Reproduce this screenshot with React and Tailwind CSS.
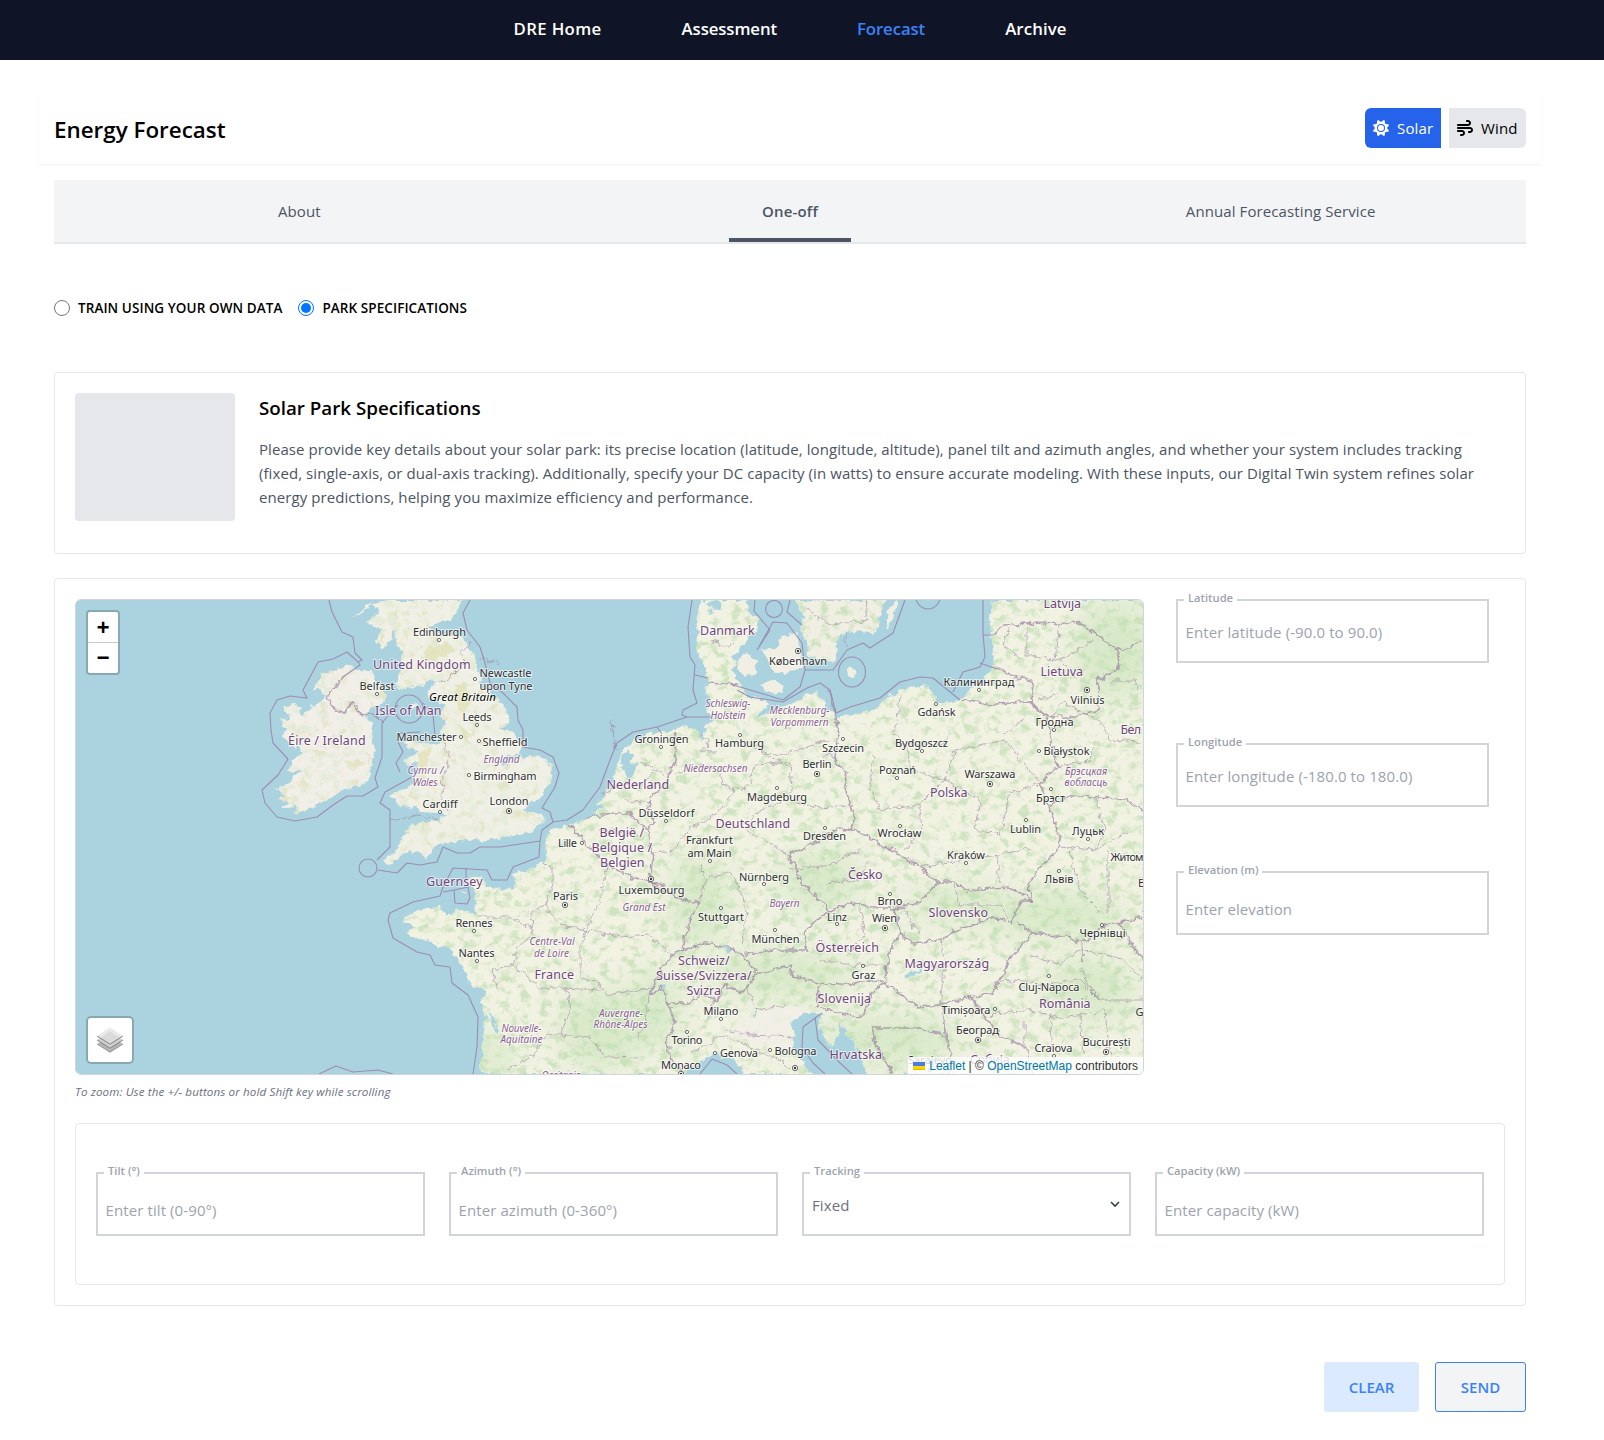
import React from "react";
import { FaSun, FaWind } from "react-icons/fa6";

const LAND =
  "M479 1074L483 1047L485 1017L483 1010L480 1002L487 992L473 987L467 977L463 968L457 957L450 948L437 947L427 940L413 938L407 932L415 927L403 922L407 915L420 912L428 908L440 907L447 915L458 910L468 912L478 913L475 903L475 890L468 882L468 877L482 877L487 887L500 890L513 888L516 883L513 874L527 870L543 863L548 855L547 840L548 831L570 825L587 818L600 816L592 812L604 806L597 804L607 790L617 770L619 757L624 749L634 741L650 733L667 732L674 728L690 727L697 733L703 742L707 723L715 720L706 710L714 703L705 693L708 683L705 667L697 653L698 633L696 620L700 600L747 600L750 615L760 618L757 630L747 638L743 645L733 657L737 662L732 670L735 678L742 687L747 697L760 697L767 703L757 718L773 710L787 705L800 701L806 694L817 693L823 699L827 710L840 718L860 713L880 706L887 697L907 688L928 685L935 697L937 702L950 705L962 697L974 687L987 676L994 664L992 640L989 617L992 600L1144 600L1144 1075L868 1075L858 1052L850 1038L840 1023L837 1036L832 1048L823 1036L819 1023L822 1013L807 1013L790 1022L795 1037L793 1047L803 1064L812 1075L745 1075L737 1063L723 1057L715 1053L703 1060L690 1070L683 1075Z";
const BRITAIN =
  "M462 600L457 610L452 620L441 622L428 627L440 634L462 637L468 647L475 657L477 670L483 687L490 693L503 703L510 717L507 726L498 728L515 733L521 744L520 755L507 756L498 762L506 765L514 758L527 756L540 757L549 762L552 770L550 783L543 795L532 803L522 810L533 812L545 816L541 823L530 832L520 835L503 837L483 842L473 840L458 842L440 843L432 848L432 855L425 857L420 850L410 852L403 855L395 860L392 865L383 862L390 855L397 848L400 842L407 830L417 823L430 822L440 820L447 813L437 813L423 812L414 806L400 807L392 795L400 790L412 783L417 772L418 763L402 764L407 757L418 750L407 748L405 741L420 743L437 745L443 740L441 730L445 723L440 713L447 707L437 700L428 697L427 690L438 682L430 680L418 687L412 685L403 690L398 687L397 677L403 667L402 653L397 643L393 628L391 640L380 648L377 640L384 627L373 628L366 621L380 613L373 603L390 600Z";
const IRELAND =
  "M347 664L353 668L362 670L372 670L375 677L380 687L386 695L384 704L374 705L365 716L372 723L373 740L374 757L370 770L368 783L353 787L340 792L327 800L313 808L293 813L297 807L282 808L290 802L278 799L287 795L275 788L290 783L293 777L302 770L288 772L293 760L305 750L293 748L282 737L287 730L280 722L290 718L282 707L293 705L302 708L300 717L313 707L323 700L327 693L313 690L320 680L323 673L337 670Z";
const ISLES = [
  "M737 658L747 653L756 661L757 673L747 677L738 671Z",
  "M763 650L777 646L782 637L797 633L800 653L802 668L790 671L777 674L768 665Z",
  "M760 684L773 680L784 684L782 693L767 692Z",
  "M796 600L803 617L800 627L807 640L808 656L833 662L838 653L836 640L847 630L875 634L878 627L881 607L888 600Z",
  "M886 628L888 610L895 600L898 601L893 617L888 629Z",
  "M847 668L856 670L855 678L848 675Z",
  "M410 706L416 701L414 711Z",
  "M374 600L366 609L352 619L361 610Z",
  "M461 892L466 892L465 895Z",
];
const LAKES = [
  "M620 760L627 749L634 754L631 764L638 763L634 772L628 779L624 772Z",
  "M657 987L667 984L667 989Z",
  "M903 977L922 969L923 971L905 979Z",
  "M753 1015L757 1008L755 1019Z",
  "M717 944L731 950L729 952Z",
  "M487 1010L495 1020L498 1032L494 1028Z",
  "M703 603L712 608L708 616L714 613L712 606L722 610L720 602Z",
];

const NATIONS = [
  "M830 690L835 713L839 737L834 762L847 770L845 787L854 820L852 830L840 828L820 840L790 855L800 880L830 912L852 902L877 908L895 908L920 902L938 882L920 867L897 853L885 847L860 832L852 830",
  "M938 882L953 882L967 892L990 888L1010 887L1032 900L1028 883L1047 860L1060 847L1060 837L1050 810L1040 783L1057 767L1047 717L1030 702L993 704L960 700",
  "M1030 702L1032 680L1010 676L997 667",
  "M993 635L1003 625L1037 622L1060 625L1077 621L1093 632L1117 650L1130 648L1142 640",
  "M1117 650L1120 668L1098 680L1098 710L1077 717L1047 717",
  "M1050 807L1067 797L1100 797L1127 800L1143 810",
  "M900 933L913 943L940 940L960 928L993 918L1010 922L1023 900L1032 900",
  "M1017 922L1033 933L1013 953L1003 973L993 993L970 997L940 1005L917 1007L885 983L887 963L892 945L900 933L895 908",
  "M1033 933L1073 938L1082 943L1100 928L1120 922L1143 918M1120 922L1130 943L1143 958",
  "M830 912L817 920L803 933L807 950L773 950L743 955L727 947L707 943L683 950L687 927L698 902L673 897L650 882L630 877L608 865L585 843L570 825",
  "M587 818L613 813L630 813L647 830L653 853L650 882L663 885L673 897",
  "M675 733L676 760L667 780L648 803L653 823L647 830",
  "M683 950L672 955L657 977L650 995L663 987L668 1003L690 1003L700 993L717 1000L725 985L743 992L757 973L743 955",
  "M757 973L767 973L790 965L793 977L820 982L847 985L867 980L885 983",
  "M668 1003L675 1023L667 1040L670 1057L682 1072",
  "M820 983L817 1007L840 1013L863 1017L873 990L885 983",
  "M942 1007L947 1037L920 1028L873 1028L873 1040L893 1074M947 1037L952 1060L948 1074",
  "M970 997L990 1023L1000 1037L1027 1047L1031 1074",
  "M708 682L722 683L737 685",
  "M343 677L333 690L327 699L338 712L345 713L352 702L362 715L375 713L382 723",
];
const SEA = [
  "M329 600L332 612L342 632L353 637L355 653L362 660L358 662L360 665L343 677M358 662L347 652L333 659L318 662L310 677L303 690L307 698L290 696L277 700L270 713L271 730L273 743L288 759L278 775L262 790L265 803L277 817L295 821L317 817L333 805L347 796L363 796L378 787L375 778L382 757L382 723L391 712",
  "M470 600L463 613L467 630L480 647L485 663L490 683L503 693L517 707L518 720L523 730L523 747L540 750L553 757L559 773L555 787L542 808L550 812L553 822L542 830L540 841L520 844L500 847L480 847L470 853L457 853L443 847L437 862L420 865L407 863L397 873L378 870",
  "M540 841L539 857L513 867L507 880L492 880L487 870L453 868L443 887L440 896L413 902L390 913L388 920L393 938L417 952L430 955L435 965L450 967L452 983L468 995L478 1017L477 1047L473 1074",
  "M377 860L390 847L390 810L380 803L385 792L412 777M454 890L468 887L470 898L467 904L455 903ZM466 868L466 880M443 892L454 890",
  "M400 772L396 763L403 752L397 740L400 733L420 732M423 703L433 715L435 735M391 712L398 705",
  "M319 1074L336 1066L353 1072L378 1070L393 1074",
  "M692 600L688 627L690 657L695 665L693 690L697 703L683 710L682 715L687 717L657 727L633 732L617 743L610 760L600 787L583 810L567 820L553 822M695 675L708 678M687 717L711 717M657 727L662 734",
  "M757 650L770 630L754 611L755 600M757 650L773 622L787 623L802 643L805 670L833 670L847 650L863 643L870 648L893 633L905 600M790 600L787 612L802 625",
  "M733 685L757 692L783 700L800 687L805 670M737 690L750 697L783 702L807 688L820 683L830 690L836 713L850 707L880 698L900 682L920 677L933 678L960 700M953 692L963 672L980 667L985 657L983 633L983 600M983 635L993 635M980 663L997 669",
  "M822 1013L803 1027L802 1047L813 1063L825 1074M815 1017L818 1040L840 1063L852 1074",
  "M700 1074L712 1059L727 1065L737 1074",
];
const REGIONS = [
  "M478 917L507 917L530 927L532 935L517 948L513 965L492 970L498 990M513 965L540 988L565 988L571 1005L560 1035L546 1034L535 1055L507 1070M560 1035L590 1037L605 1057L640 1058M565 988L600 990M532 935L533 910L545 905L552 885L552 867L543 863",
  "M545 905L560 925L587 930L600 900L607 867M587 930L580 945L580 977L600 985L605 995L640 990L655 985M587 930L620 937L650 935L672 955",
  "M443 743L450 757L443 775L442 800L448 812M472 641L460 655L466 662L450 678L438 682M480 658L500 664",
  "M390 820L415 815L440 820M650 990L645 1025L637 1040",
  "M710 640L725 648L733 643M675 775L700 765L720 770L723 785L733 790L725 805L708 820L690 828L673 850L655 852M723 785L745 790L757 765L790 762L792 790L785 800L757 812L745 830",
  "M700 865L705 880L700 900M705 880L730 872L740 890L748 912L742 945M760 750L780 755L830 740M790 800L820 808L850 805M745 830L790 855",
  "M750 745L790 768M820 760L830 752L840 765M703 733L708 745L700 752L716 752",
  "M900 695L895 735L907 745L942 745L950 730M873 755L870 785L880 810L920 805L945 780L955 750L1005 740L1025 765L1040 783M907 745L912 770L945 780L980 800L975 830L1000 835M920 805L922 830L905 850M1000 835L1010 793L1040 783",
  "M1025 718L1003 735M1040 700L1060 693M1010 627L1003 645L1020 660M1027 627L1027 655L1060 660M1060 625L1055 660M1093 640L1060 660L1075 680M1050 718L1062 703L1100 720L1110 740L1140 742M1110 680L1135 680L1138 690",
  "M1057 767L1090 760L1095 742M1095 797L1105 830L1095 850M1070 850L1080 890L1100 910M1108 850L1108 915M1060 847L1095 850L1130 830",
  "M940 940L945 960L940 1005M905 910L918 935M960 905L1000 905L1012 925M953 882L960 905M997 855L1000 885M920 867L960 860L1000 855L1030 848",
  "M1030 955L1060 965L1080 950L1120 958L1143 980M1040 985L1080 980L1100 1000L1143 1000M1000 980L1035 983M1025 1020L1025 1045M1050 1015L1053 1050M1080 1015L1083 1055M1105 1010L1110 1060M990 1015L1025 1010L1060 1017L1100 1012M1082 943L1083 975L1095 995",
  "M790 870L830 865L860 850M825 883L858 880L870 860M820 960L850 965L880 965M860 905L865 935L845 955M745 985L755 1010L790 1005M725 1030L750 1035L795 1037M707 1020L715 1000M690 1053L725 1035L780 1060L790 1070",
  "M612 720L615 750M640 762L665 775M625 800L650 803M600 830L640 835M637 790L655 770M600 795L630 782",
  "M807 610L830 625L870 620M865 600L868 620M845 630L845 645",
];

// [text, centre x, baseline y, width]
const COUNTRIES = [
  ["United Kingdom", 422, 668.5, 98], ["Isle of Man", 408.5, 714.5, 67], ["Éire / Ireland", 327, 745, 78],
  ["Danmark", 727.5, 634.5, 55], ["Nederland", 638, 788.5, 63], ["België /", 622, 837, 45],
  ["Belgique /", 622, 852, 61], ["Belgien", 622.5, 867, 45], ["Deutschland", 753, 828, 75],
  ["Guernsey", 454.5, 885.5, 57], ["France", 554.5, 979, 40], ["Polska", 949, 797, 38],
  ["Lietuva", 1062, 676, 43], ["Latvija", 1062.5, 608, 38], ["Бел", 1131, 733.5, 21],
  ["Česko", 865.5, 878.5, 35], ["Slovensko", 958.5, 916.5, 60], ["Österreich", 847.5, 951.5, 64],
  ["Magyarország", 947, 968, 85], ["Slovenija", 844.5, 1002.5, 54], ["Hrvatska", 856, 1059, 53],
  ["România", 1065, 1008, 52], ["Schweiz/", 704, 964.5, 52], ["Suisse/Svizzera/", 704, 979.5, 96],
  ["Svizra", 704, 995, 35], ["Србија", 990, 1064, 40],
];
const AREAS = [
  ["England", 501.5, 763, 36], ["Cymru /", 425.5, 774, 36], ["Wales", 425, 786, 25],
  ["Schleswig-", 728, 706.5, 45], ["Holstein", 728, 718.5, 35], ["Mecklenburg-", 799.5, 714, 60],
  ["Vorpommern", 799.5, 726, 58], ["Niedersachsen", 715.5, 772, 64], ["Grand Est", 644, 911, 43],
  ["Bayern", 784.5, 906.5, 30], ["Centre-Val", 552, 944.5, 45], ["de Loire", 551.5, 956.5, 35],
  ["Nouvelle-", 521.5, 1031.5, 40], ["Aquitaine", 521.5, 1043, 42], ["Auvergne-", 621, 1016.5, 44],
  ["Rhône-Alpes", 620.5, 1028, 54], ["Occitanie", 561, 1079, 39], ["Брэсцкая", 1086, 774.5, 42],
  ["вобласць", 1086, 786, 43],
];
const CITIES = [
  ["Edinburgh", 439.5, 636, 53], ["Newcastle", 505.5, 676.5, 52], ["upon Tyne", 506, 690, 53],
  ["Belfast", 377, 690, 35], ["Leeds", 477, 721, 29], ["Manchester", 426.5, 741, 60],
  ["Sheffield", 505, 745.5, 45], ["Birmingham", 505, 779.5, 63], ["Cardiff", 440, 808, 35],
  ["London", 509, 805, 39], ["Lille", 567.5, 846.5, 19], ["Groningen", 661.5, 743, 54],
  ["Hamburg", 739.5, 747, 49], ["Szczecin", 843, 751.5, 42], ["Berlin", 817, 768, 29],
  ["København", 798, 665, 58], ["Magdeburg", 777, 800.5, 60], ["Düsseldorf", 666.5, 817, 56],
  ["Frankfurt", 709.5, 843.5, 47], ["am Main", 709.5, 857, 44], ["Dresden", 824.5, 840, 43],
  ["Nürnberg", 764, 880.5, 50], ["Luxembourg", 651.5, 893.5, 66], ["Stuttgart", 721, 920.5, 46],
  ["München", 775.5, 942.5, 48], ["Linz", 837, 920.5, 20], ["Paris", 565.5, 899.5, 25],
  ["Rennes", 474, 927, 37], ["Nantes", 476.5, 957, 36], ["Graz", 863.5, 978.5, 24],
  ["Milano", 721, 1015, 35], ["Torino", 687, 1043.5, 31], ["Genova", 739, 1057, 38],
  ["Bologna", 795.5, 1054.5, 42], ["Monaco", 681, 1068.5, 40], ["Wrocław", 899.5, 837, 44],
  ["Poznań", 897.5, 773.5, 37], ["Bydgoszcz", 921.5, 747, 53], ["Gdańsk", 936.5, 716, 38],
  ["Калининград", 979, 685.5, 71], ["Warszawa", 990, 778, 51], ["Białystok", 1066.5, 755, 46],
  ["Vilnius", 1087.5, 704, 34], ["Гродна", 1054.5, 725.5, 38], ["Брэст", 1050.5, 802, 29],
  ["Lublin", 1025.5, 833, 31], ["Луцьк", 1088, 835, 32], ["Львів", 1059, 883, 29],
  ["Kraków", 966, 858.5, 38], ["Житом", 1127, 860.5, 33], ["В", 1141.5, 887, 7],
  ["Brno", 890, 905, 25], ["Wien", 884.5, 921.5, 25], ["Чернівці", 1102.5, 937, 46],
  ["Cluj-Napoca", 1049, 990.5, 61], ["Timișoara", 966, 1014, 49], ["Београд", 977.5, 1034, 43],
  ["Craiova", 1053.5, 1052, 38], ["București", 1106.5, 1046, 48], ["G", 1139.5, 1016, 7],
  ["Sarajevo", 930, 1064, 44],
];
const DOTS = [
  [439, 640], [475, 679], [377, 694], [477, 725], [461, 737], [479, 741], [469, 775], [440, 812],
  [582, 843], [661, 747], [740, 735], [843, 739], [777, 788], [666, 821], [710, 861], [825, 828],
  [764, 884], [721, 908], [775, 930], [837, 924], [474, 931], [477, 961], [863, 966], [721, 1019],
  [687, 1032], [715, 1053], [770, 1050], [900, 826], [897, 778], [922, 751], [936, 704], [979, 690],
  [1039, 751], [1054, 730], [1051, 789], [1026, 820], [1088, 839], [1059, 871], [966, 863], [890, 894],
  [1102, 925], [1049, 976], [995, 1009], [1054, 1056], [930, 1070],
];
const CAPITALS = [
  [509, 811], [565, 905], [798, 651], [817, 774], [651, 879], [990, 784], [1087, 690], [885, 928],
  [978, 1040], [1106, 1052], [795, 1068], [681, 1074],
];

function Labels({ items, className, size, spacing }) {
  return items.map(([text, x, y, width]) => (
    <text
      key={text + x}
      x={x}
      y={y}
      textAnchor="middle"
      textLength={width}
      fontSize={size}
      letterSpacing={spacing}
      className={className}
      stroke="#ffffff"
      strokeOpacity="0.65"
      strokeWidth="2"
      strokeLinejoin="round"
      paintOrder="stroke"
    >
      {text}
    </text>
  ));
}

function EuropeMap() {
  return (
    <svg viewBox="76 600 1067 474" className="block h-full w-full font-['Noto_Sans',sans-serif]">
      <defs>
        <filter id="rough" x="0" y="0" width="100%" height="100%" colorInterpolationFilters="sRGB">
          <feTurbulence type="fractalNoise" baseFrequency="0.14" numOctaves="3" seed="4" result="n" />
          <feDisplacementMap in="SourceGraphic" in2="n" scale="8" xChannelSelector="R" yChannelSelector="G" />
        </filter>
        <filter id="forest" filterUnits="userSpaceOnUse" x="76" y="600" width="1067" height="474" colorInterpolationFilters="sRGB">
          <feTurbulence type="fractalNoise" baseFrequency="0.1 0.12" numOctaves="5" seed="11" />
          <feColorMatrix values="0 0 0 0 0.75  0 0 0 0 0.87  0 0 0 0 0.69  4 0 0 0 -1.95" />
          <feComposite in2="SourceGraphic" operator="in" />
        </filter>
        <filter id="heath" filterUnits="userSpaceOnUse" x="76" y="600" width="1067" height="474" colorInterpolationFilters="sRGB">
          <feTurbulence type="fractalNoise" baseFrequency="0.1" numOctaves="4" seed="23" />
          <feColorMatrix values="0 0 0 0 0.88  0 0 0 0 0.89  0 0 0 0 0.74  0 6 0 0 -3.5" />
          <feComposite in2="SourceGraphic" operator="in" />
        </filter>
        <filter id="soft" x="-50%" y="-50%" width="200%" height="200%">
          <feGaussianBlur stdDeviation="14" />
        </filter>
        <clipPath id="main"><path d={LAND} /></clipPath>
      </defs>
      <rect x="76" y="600" width="1067" height="474" fill="#aad3df" />
      <g filter="url(#rough)">
        <rect x="76" y="600" width="1067" height="474" fill="#aad3df" />
        <path d={LAND} fill="#f2f2e3" />
        <path d={BRITAIN} fill="#f1f0e6" />
        <path d={IRELAND} fill="#f1efe8" />
        {ISLES.map((d) => <path key={d} d={d} fill="#f1efe4" />)}
        <g clipPath="url(#main)">
          <g filter="url(#soft)" fill="#cde5bd" opacity="0.7">
            <ellipse cx="780" cy="975" rx="75" ry="22" />
            <ellipse cx="1055" cy="915" rx="70" ry="22" />
            <ellipse cx="1090" cy="990" rx="45" ry="30" />
            <ellipse cx="960" cy="905" rx="55" ry="16" />
            <ellipse cx="600" cy="1030" rx="40" ry="40" />
            <ellipse cx="495" cy="1055" rx="16" ry="26" />
            <ellipse cx="890" cy="1040" rx="70" ry="24" />
            <ellipse cx="700" cy="900" rx="30" ry="45" />
            <ellipse cx="655" cy="1010" rx="26" ry="40" />
            <ellipse cx="1115" cy="650" rx="40" ry="50" />
            <ellipse cx="820" cy="880" rx="40" ry="30" />
          </g>
        </g>
        <g filter="url(#forest)" opacity="0.7"><path d={LAND} /><path d={ISLES[3]} /></g>
        <g filter="url(#forest)" opacity="0.25"><path d={BRITAIN} /><path d={IRELAND} /></g>
        <g filter="url(#heath)" opacity="0.7"><path d={BRITAIN} /><path d={IRELAND} /></g>
        <path d="M738 1020L790 1004L806 1013L788 1024L792 1050L770 1046L730 1036Z" fill="#f2eee7" opacity="0.85" />
        <g fill="#dfe0b2" opacity="0.7">
          <path d="M425 648L446 643L455 650L440 658L425 660Z M455 685L466 682L472 700L464 715L456 705Z M380 640L385 628L383 645Z M418 755L430 748L428 764L418 770Z M458 725L466 730L470 745L464 740Z M366 750L371 755L368 762Z M281 795L292 797L285 802Z" />
        </g>
        {LAKES.map((d) => <path key={d} d={d} fill="#aad3df" />)}
        <g fill="none" stroke="#a088a6" strokeLinejoin="round">
          {REGIONS.map((d) => <path key={d} d={d} strokeWidth="0.9" opacity="0.7" />)}
          {NATIONS.map((d) => <path key={d} d={d} strokeWidth="1.7" opacity="0.75" />)}
        </g>
      </g>
      <g fill="none" stroke="#9a86ad" strokeWidth="1.1" strokeLinejoin="round" opacity="0.9">
        {SEA.map((d) => <path key={d} d={d} />)}
        <circle cx="368" cy="868" r="9" />
        <circle cx="409" cy="709" r="14" />
        <circle cx="774" cy="609" r="8.5" />
        <circle cx="928" cy="597" r="12" />
        <ellipse cx="852" cy="672" rx="13.5" ry="15" />
      </g>
      <g fill="#ffffff" stroke="#4a4a4a" strokeWidth="0.8">
        {DOTS.map(([x, y]) => <circle key={x + "-" + y} cx={x} cy={y} r="1.6" />)}
        {CAPITALS.map(([x, y]) => <circle key={x + "-" + y} cx={x} cy={y} r="2.7" />)}
      </g>
      {CAPITALS.map(([x, y]) => <circle key={x + "-" + y} cx={x} cy={y} r="1.2" fill="#333333" />)}
      <Labels items={AREAS} className="fill-[#8b5f91] italic" size="10" />
      <Labels items={COUNTRIES} className="fill-[#70457a]" size="12.5" spacing="0.4" />
      <Labels items={CITIES} className="fill-[#2f2f2f]" size="11" />
      <Labels items={[["Great Britain", 462.5, 700.5, 67]]} className="fill-black italic" size="11.5" />
    </svg>
  );
}

function LayersIcon() {
  return (
    <svg viewBox="0 0 26 26" className="h-[26px] w-[26px]">
      <path d="M0 17L13 9L26 17L13 25.4Z" fill="#b5b5b5" />
      <path d="M0 17L13 25.2L26 17" fill="none" stroke="#8d8d8d" strokeWidth="0.8" />
      <path d="M0 13L13 5L26 13L13 21.4Z" fill="#cfcfcf" />
      <path d="M0 13L13 21.2L26 13" fill="none" stroke="#777777" strokeWidth="0.9" />
      <path d="M0 9L13 0.6L26 9L13 17.4Z" fill="#e9e9e9" />
      <path d="M3 11L13 4.5L23 11L13 17.2Z" fill="#dadada" />
      <path d="M0 9L13 17.2L26 9" fill="none" stroke="#777777" strokeWidth="0.9" />
    </svg>
  );
}

function Field({ label, placeholder, inputClass, children }) {
  return (
    <div className="relative h-16 border-2 border-[#d1d5db]">
      <label className="absolute -top-[11px] left-1.5 bg-white px-1 text-[11.2px] leading-4 font-semibold whitespace-nowrap text-[#9ca3af]">
        {label}
      </label>
      {children || (
        <input
          placeholder={placeholder}
          className={"h-full w-full bg-transparent px-[7.5px] text-[15px] tracking-[0.1px] outline-none placeholder:text-[#9ca3af] " + inputClass}
        />
      )}
    </div>
  );
}

function Tab({ active, children }) {
  return (
    <div className="flex flex-1 justify-center">
      <button
        className={
          active
            ? "w-[122px] border-b-4 border-[#4b5563] pt-1 text-[15px] font-semibold tracking-[0.2px] text-[#4b5563]"
            : "border-b-4 border-transparent pt-1 text-[15px] tracking-[0.1px] text-[#4b5563]"
        }
      >
        {children}
      </button>
    </div>
  );
}

function Radio({ checked, children }) {
  return (
    <label className="flex items-center gap-2">
      <span
        className={
          checked
            ? "flex h-4 w-4 items-center justify-center rounded-full border border-[#0075ff]"
            : "flex h-4 w-4 items-center justify-center rounded-full border border-[#767676]"
        }
      >
        {checked && <span className="h-2.5 w-2.5 rounded-full bg-[#0075ff]" />}
      </span>
      <span className="text-[13.5px] leading-5 font-semibold tracking-[0.08px] whitespace-nowrap">{children}</span>
    </label>
  );
}

export default function App() {
  return (
    <div className="h-[1440px] w-[1604px] overflow-hidden bg-white font-['Open_Sans',sans-serif] text-black">
      <header className="h-[60px] bg-[#0f1526] pr-6">
        <nav className="flex h-[58px] items-center justify-center gap-20 text-[16.8px] font-semibold text-white">
          <a className="tracking-[0.35px]">DRE Home</a>
          <a className="tracking-[-0.1px]">Assessment</a>
          <a className="tracking-[-0.1px] text-[#3b82f6]">Forecast</a>
          <a className="tracking-[0.1px]">Archive</a>
        </nav>
      </header>

      <main className="ml-[38px] w-[1504px] pt-8">
        <section className="flex h-[72px] items-center justify-between px-4 shadow-[0_1px_2px_0_rgba(0,0,0,0.05)]">
          <h1 className="pt-1 text-[22.4px] font-semibold">Energy Forecast</h1>
          <div className="flex gap-2 text-[15px] tracking-[0.15px]">
            <button className="flex h-10 w-[76px] items-center gap-2 rounded-l-md bg-[#2563eb] px-2 text-white">
              <FaSun className="h-4 w-4 shrink-0" />
              Solar
            </button>
            <button className="flex h-10 w-[77px] items-center gap-2 rounded-r-md bg-[#e5e7eb] px-2">
              <FaWind className="h-4 w-4 shrink-0" />
              Wind
            </button>
          </div>
        </section>

        <div className="px-4">
          <div className="mt-4 flex h-16 border-b-2 border-[#e5e7eb] bg-[#f3f4f6]">
            <Tab>About</Tab>
            <Tab active>One-off</Tab>
            <Tab>Annual Forecasting Service</Tab>
          </div>

          <div className="mt-[54px] flex gap-4">
            <Radio>TRAIN USING YOUR OWN DATA</Radio>
            <Radio checked>PARK SPECIFICATIONS</Radio>
          </div>

          <section className="mt-[54px] flex h-[182px] gap-6 rounded border border-[#e5e7eb] p-5">
            <div className="h-32 w-40 shrink-0 rounded bg-[#e5e7eb]" />
            <div>
              <h2 className="text-[18.75px] leading-[30px] font-semibold">Solar Park Specifications</h2>
              <p className="mt-3.5 text-[15px] leading-6 tracking-[0.073px] whitespace-nowrap text-[#4b5563]">
                Please provide key details about your solar park: its precise location (latitude, longitude, altitude), panel tilt and azimuth angles, and whether your system includes tracking
                <br />
                (fixed, single-axis, or dual-axis tracking). Additionally, specify your DC capacity (in watts) to ensure accurate modeling. With these inputs, our Digital Twin system refines solar
                <br />
                energy predictions, helping you maximize efficiency and performance.
              </p>
            </div>
          </section>

          <section className="mt-6 h-[728px] rounded border border-[#e5e7eb] p-5">
            <div className="flex h-[524px] gap-8">
              <div className="w-[1069px]">
                <div className="relative h-[476px] overflow-hidden rounded-md border border-[#d1d5db]">
                  <EuropeMap />
                  <div className="absolute top-2.5 left-2.5 w-[34px] overflow-hidden rounded border-2 border-black/20 bg-clip-padding font-['Liberation_Mono',monospace] text-[22px] font-bold">
                    <div className="flex h-[31px] items-center justify-center border-b border-[#ccc] bg-white pt-[5px] leading-none">+</div>
                    <div className="flex h-[30px] items-center justify-center bg-white pt-[3px] leading-none">−</div>
                  </div>
                  <div className="absolute bottom-2.5 left-2.5 flex h-12 w-12 items-center justify-center rounded-[5px] border-2 border-black/20 bg-white bg-clip-padding">
                    <LayersIcon />
                  </div>
                  <div className="absolute right-0 bottom-0 flex h-[17px] items-center bg-white/80 px-[5px] font-['Liberation_Sans',sans-serif] text-[12px] whitespace-pre text-[#333]">
                    <svg viewBox="0 0 12 8" className="mr-1 h-2 w-3">
                      <path fill="#4C7BE1" d="M0 0h12v4H0z" />
                      <path fill="#FFD500" d="M0 4h12v3H0z" />
                      <path fill="#E0BC00" d="M0 7h12v1H0z" />
                    </svg>
                    <a className="text-[#0078a8]">Leaflet</a>
                    <span> | © </span>
                    <a className="text-[#0078a8]">OpenStreetMap</a>
                    <span> contributors</span>
                  </div>
                </div>
                <p className="mt-[7px] text-[11.6px] leading-5 tracking-[0.12px] text-[#6b7280] italic">
                  To zoom: Use the +/- buttons or hold Shift key while scrolling
                </p>
              </div>
              <div className="w-[313px]">
                <Field label="Latitude" placeholder="Enter latitude (-90.0 to 90.0)" inputClass="pt-0.5" />
                <div className="mt-20">
                  <Field label="Longitude" placeholder="Enter longitude (-180.0 to 180.0)" inputClass="pt-0.5" />
                </div>
                <div className="mt-16">
                  <Field label="Elevation (m)" placeholder="Enter elevation" inputClass="pt-[11px]" />
                </div>
              </div>
            </div>

            <div className="grid h-[162px] grid-cols-4 gap-6 rounded border border-[#e5e7eb] px-5 pt-12">
              <Field label="Tilt (°)" placeholder="Enter tilt (0-90°)" inputClass="pt-[11px]" />
              <Field label="Azimuth (°)" placeholder="Enter azimuth (0-360°)" inputClass="pt-[11px]" />
              <Field label="Tracking">
                <div className="flex h-full items-center justify-between pr-[9px] pl-2 pt-0.5 text-[15px] tracking-[0.1px] text-[#6b7280]">
                  <span>Fixed</span>
                  <svg viewBox="0 0 10 7" className="h-[7px] w-2.5 -translate-y-px">
                    <path d="M1 1l4 4 4-4" fill="none" stroke="#374151" strokeWidth="1.6" />
                  </svg>
                </div>
              </Field>
              <Field label="Capacity (kW)" placeholder="Enter capacity (kW)" inputClass="pt-[11px]" />
            </div>
          </section>

          <div className="mt-14 flex justify-end gap-4 text-[15px] font-semibold text-[#3b82f6]">
            <button className="h-[50px] w-[95px] rounded-[3px] bg-[#dbeafe] pt-px">CLEAR</button>
            <button className="h-[50px] w-[91px] rounded-[3px] border border-[#3b82f6] bg-[#f3f4f6] pt-px">SEND</button>
          </div>
        </div>
      </main>
    </div>
  );
}
